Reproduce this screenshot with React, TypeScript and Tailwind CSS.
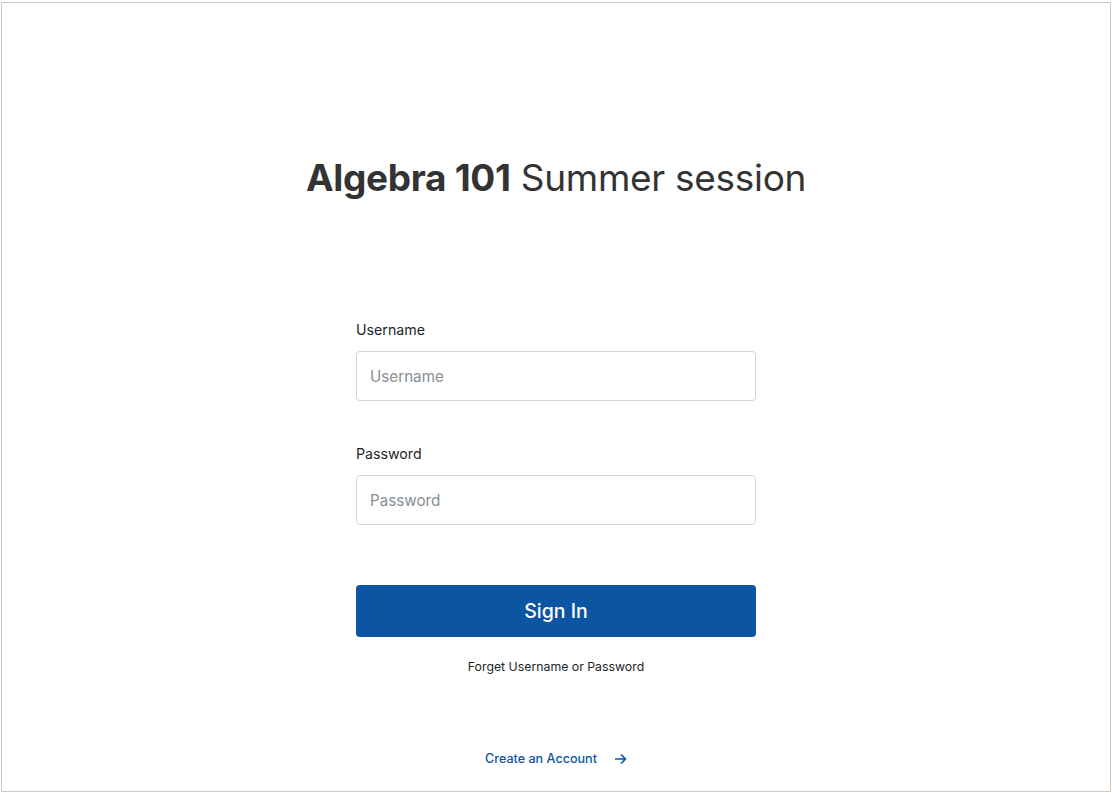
import React from "react";

const font = { fontFamily: "Inter, 'Noto Sans', sans-serif" };

const Field = ({ label, type }: { label: string; type: string }) => (
  <div>
    <label className="block text-[14.2px] leading-5 text-[#212529]">{label}</label>
    <input
      type={type}
      placeholder={label}
      className="mt-[11px] block h-[50px] w-full rounded-[4px] border border-[#d4d7da] bg-white px-[13px] text-[15.2px] text-[#212529] outline-none placeholder:text-[#868e96]"
    />
  </div>
);

export default function App() {
  return (
    <div className="bg-white" style={font}>
      <div className="mx-[1px] mt-[2px] flex h-[790px] flex-col items-center border border-[#cdc8c0]">
        <h1 className="mt-[153px] text-[37px] leading-[44px] tracking-[-0.3px] text-[#333333]">
          <span className="font-bold">Algebra 101</span> Summer session
        </h1>

        <form className="mt-[120px] w-[400px]" onSubmit={(e) => e.preventDefault()}>
          <Field label="Username" type="text" />
          <div className="mt-[43px]">
            <Field label="Password" type="password" />
          </div>
          <button
            type="submit"
            className="mt-[60px] block h-[52px] w-full rounded-[4px] bg-[#0b55a3] pt-[2px] text-[19.5px] font-medium text-white"
          >
            Sign In
          </button>
          <p className="mt-[21px] text-center text-[12.3px] leading-[18px] text-[#212529]">
            Forget Username or Password
          </p>
        </form>

        <a href="#" className="mt-[74px] flex items-center gap-[17px] text-[12.6px] leading-[18px] font-medium text-[#0b55a3]">
          Create an Account
          <svg width="13" height="12" viewBox="0 0 13 12" fill="none" stroke="currentColor" strokeWidth="1.6">
            <path d="M1 6h10.5M7 1.5 11.5 6 7 10.5" />
          </svg>
        </a>
      </div>
    </div>
  );
}
